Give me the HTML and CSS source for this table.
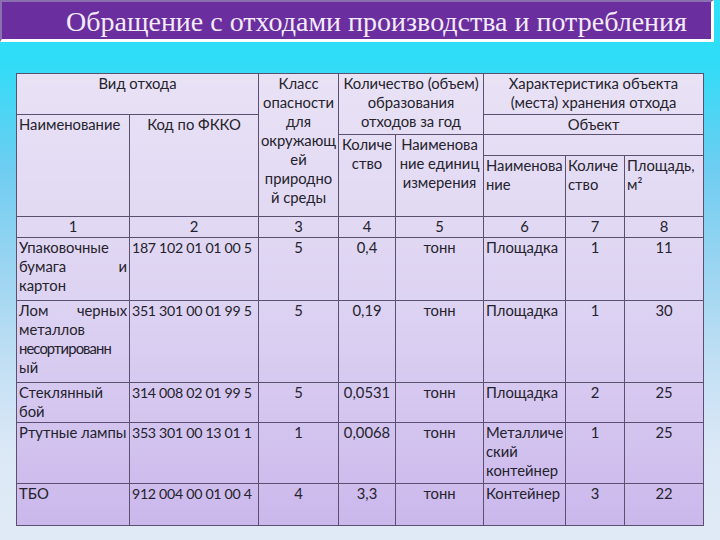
FILE: index.html
```html
<!DOCTYPE html>
<html lang="ru">
<head>
<meta charset="utf-8">
<title>Обращение с отходами</title>
<link rel="stylesheet" href="styles.css">
</head>
<body>
<div class="page">
  <header class="title-bar"><h1 class="title">Обращение с отходами производства и потребления</h1></header>
  <main class="content">
    <table class="waste">
      <colgroup>
        <col class="c1"><col class="c2"><col class="c3"><col class="c4"><col class="c5"><col class="c6"><col class="c7"><col class="c8">
      </colgroup>
      <thead>
        <tr class="hA">
          <th colspan="2" class="center">Вид отхода</th>
          <th rowspan="4" class="center narrow">Класс<br>опасности<br>для<br>окружающ<br>ей<br>природно<br>й среды</th>
          <th colspan="2" rowspan="2" class="center">Количество (объем)<br>образования<br>отходов за год</th>
          <th colspan="3" class="center">Характеристика объекта<br>(места) хранения отхода</th>
        </tr>
        <tr class="hB">
          <th rowspan="3" class="left">Наименование</th>
          <th rowspan="3" class="center">Код по ФККО</th>
          <th colspan="3" class="center">Объект</th>
        </tr>
        <tr class="hC">
          <th rowspan="2" class="center">Количе<br>ство</th>
          <th rowspan="2" class="center">Наименова<br>ние единиц<br>измерения</th>
          <th colspan="3"></th>
        </tr>
        <tr class="hD">
          <th class="left narrow-l">Наименова<br>ние</th>
          <th class="left">Количе<br>ство</th>
          <th class="left">Площадь,<br>м²</th>
        </tr>
      </thead>
      <tbody>
        <tr class="num">
          <td class="center">1</td><td class="center">2</td><td class="center">3</td><td class="center">4</td><td class="center">5</td><td class="center">6</td><td class="center">7</td><td class="center">8</td>
        </tr>
        <tr class="r1">
          <td class="left"><span class="ln">Упаковочные</span><span class="ln j">бумага и</span><span class="ln">картон</span></td>
          <td class="left code">187 102 01 01 00 5</td>
          <td class="center">5</td><td class="center">0,4</td><td class="center">тонн</td>
          <td class="left">Площадка</td><td class="center">1</td><td class="center">11</td>
        </tr>
        <tr class="r2">
          <td class="left"><span class="ln j">Лом черных</span><span class="ln">металлов</span><span class="ln tight">несортированн</span><span class="ln">ый</span></td>
          <td class="left code">351 301 00 01 99 5</td>
          <td class="center">5</td><td class="center">0,19</td><td class="center">тонн</td>
          <td class="left">Площадка</td><td class="center">1</td><td class="center">30</td>
        </tr>
        <tr class="r3">
          <td class="left"><span class="ln">Стеклянный</span><span class="ln">бой</span></td>
          <td class="left code">314 008 02 01 99 5</td>
          <td class="center">5</td><td class="center">0,0531</td><td class="center">тонн</td>
          <td class="left">Площадка</td><td class="center">2</td><td class="center">25</td>
        </tr>
        <tr class="r4">
          <td class="left">Ртутные лампы</td>
          <td class="left code">353 301 00 13 01 1</td>
          <td class="center">1</td><td class="center">0,0068</td><td class="center">тонн</td>
          <td class="left"><span class="ln">Металличе</span><span class="ln">ский</span><span class="ln">контейнер</span></td>
          <td class="center">1</td><td class="center">25</td>
        </tr>
        <tr class="r5">
          <td class="left">ТБО</td>
          <td class="left code">912 004 00 01 00 4</td>
          <td class="center">4</td><td class="center">3,3</td><td class="center">тонн</td>
          <td class="left">Контейнер</td><td class="center">3</td><td class="center">22</td>
        </tr>
      </tbody>
    </table>
  </main>
</div>
</body>
</html>
```

FILE: styles.css
```css
html, body {
  margin: 0;
  padding: 0;
}
body {
  width: 720px;
  height: 540px;
  overflow: hidden;
  background: linear-gradient(to bottom, #2de0f8 0px, #2fdcf7 60px, #6fcdf1 170px, #9cd5f1 270px, #c4e0f4 370px, #dbe8f6 450px, #e0eaf6 540px);
}
.page {
  width: 720px;
  height: 540px;
  display: flex;
  flex-direction: column;
}
.title-bar {
  margin: 0;
  height: 37px;
  width: 709px;
  background: #6a2e9e;
  border-top: 2px solid #8a70b0;
  border-left: 2px solid #8a70b0;
  border-right: 3px solid #ffffff;
  border-bottom: 3px solid #ffffff;
  box-sizing: content-box;
  padding: 0;
}
.title {
  margin: 0;
  padding: 3px 0 0 64px;
  font-family: "Liberation Serif", "Times New Roman", serif;
  font-weight: normal;
  font-size: 28px;
  line-height: 33px;
  color: #f3eafa;
  white-space: nowrap;
}
.content {
  padding: 31px 0 0 16px;
}
.waste {
  border-collapse: collapse;
  table-layout: fixed;
  width: 687px;
  background: linear-gradient(to bottom, #e9e2f5 0%, #ddd3f2 50%, #cbb8ec 100%);
  font-family: Lato, "Open Sans", "Noto Sans", sans-serif;
  font-size: 14.8px;
  line-height: 19px;
  color: #24222c;
}
.c1 { width: 113px; }
.c2 { width: 129px; }
.c3 { width: 80px; }
.c4 { width: 57px; }
.c5 { width: 88px; }
.c6 { width: 82px; }
.c7 { width: 59px; }
.c8 { width: 79px; }
.waste th, .waste td {
  border: 1px solid #5c5070;
  padding: 0 2px;
  vertical-align: top;
  font-weight: normal;
  white-space: nowrap;
}
.waste th.narrow {
  padding: 0;
}
.waste th.narrow-l {
  padding: 0 0 0 2px;
}
.center { text-align: center; }
.left { text-align: left; }
.ln { display: block; }
.j { text-align: justify; text-align-last: justify; }
.tight { letter-spacing: -0.9px; }
.code { letter-spacing: -0.3px; font-size: 14.2px; }
.hA { height: 41px; }
.hB { height: 20px; }
.hC { height: 21px; }
.hD { height: 61px; }
.num { height: 21px; }
.r1 { height: 63px; }
.r2 { height: 82px; }
.r3 { height: 40px; }
.r4 { height: 61px; }
.r5 { height: 42px; }
```
